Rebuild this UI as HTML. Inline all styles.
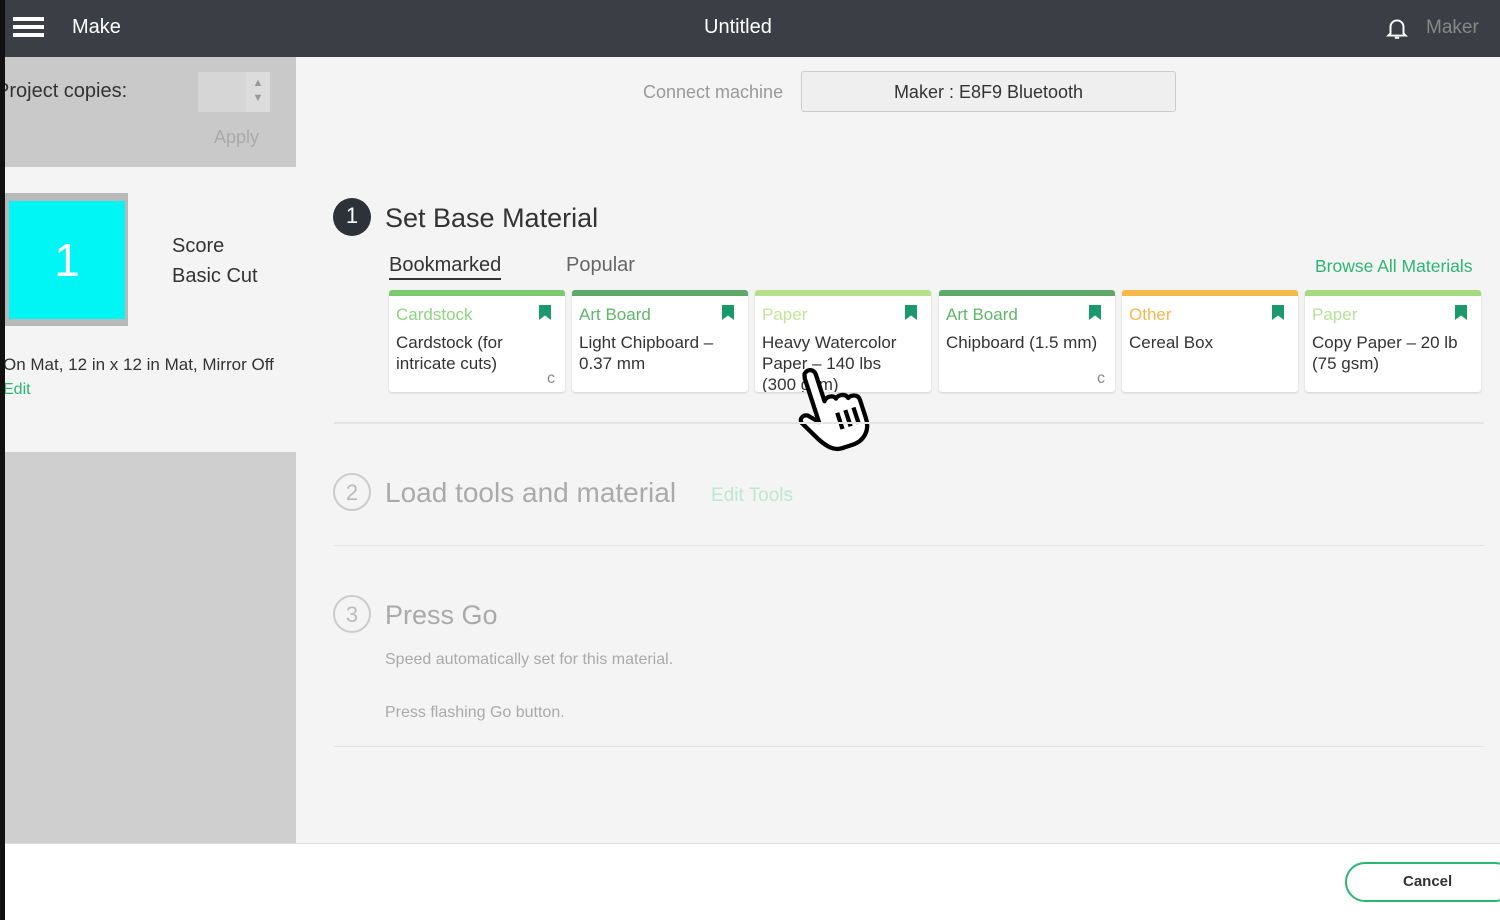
<!DOCTYPE html>
<html><head><style>
*{margin:0;padding:0;box-sizing:border-box}
body{width:1500px;height:920px;overflow:hidden;background:#f4f4f4;font-family:"Liberation Sans",sans-serif;position:relative;color:#333}
.a{position:absolute}
.hdr{left:0;top:0;width:1500px;height:57px;background:#3b3f45;color:#fff}
.card{position:absolute;top:290px;width:176px;height:102px;background:#fff;border-radius:3px;box-shadow:0 1px 2px rgba(0,0,0,.15);overflow:hidden}
.card .bar{height:6px}
.card .cat{position:absolute;left:7px;top:15px;font-size:17px}
.card .nm{position:absolute;left:7px;top:42px;font-size:17px;line-height:21px;color:#333}
.card .bm{position:absolute;right:14px;top:15px;width:12px;height:15px;background:#1a9a6c;clip-path:polygon(0 0,100% 0,100% 100%,50% 70%,0 100%)}
.circ{width:38px;height:38px;border-radius:50%;text-align:center;line-height:36px;font-size:22px}
</style></head><body>
<div class="a" style="left:0;top:0;width:5px;height:920px;background:#111;z-index:5"></div>
<div class="a hdr">
 <div class="a" style="left:13px;top:17px;width:31px;height:4px;background:#fff;box-shadow:0 8px 0 #fff,0 16px 0 #fff"></div>
 <div class="a" style="left:72px;top:16px;font-size:20px">Make</div>
 <div class="a" style="left:704px;top:16px;font-size:20px">Untitled</div>
 <svg class="a" style="left:1384px;top:15px" width="26" height="26" viewBox="0 0 24 24" fill="none" stroke="#fff" stroke-width="1.8"><path d="M6 17V11a6 6 0 0112 0v6l2 2H4z"/><path d="M10 21h4"/></svg>
 <div class="a" style="left:1426px;top:17px;font-size:19px;color:#888">Maker</div>
</div>
<div class="a" style="left:5px;top:57px;width:291px;height:110px;background:#c9c9c9"></div>
<div class="a" style="left:-4px;top:80px;font-size:20px;color:#333">Project copies:</div>
<div class="a" style="left:198px;top:72px;width:72px;height:40px;background:#d6d6d6"></div>
<div class="a" style="left:246px;top:72px;width:24px;height:40px;background:#dcdcdc;color:#999;font-size:11px;text-align:center;line-height:15px;padding-top:4px">▲<br>▼</div>
<div class="a" style="left:214px;top:127px;font-size:18px;color:#aaa">Apply</div>
<div class="a" style="left:5px;top:193px;width:123px;height:133px;background:#b9b9b9"></div>
<div class="a" style="left:9px;top:201px;width:116px;height:118px;background:#00f5f5;color:#fff;font-size:46px;text-align:center;line-height:118px">1</div>
<div class="a" style="left:172px;top:235px;font-size:20px">Score</div>
<div class="a" style="left:172px;top:265px;font-size:20px">Basic Cut</div>
<div class="a" style="left:3px;top:355px;font-size:17px">On Mat, 12 in x 12 in Mat, Mirror Off</div>
<div class="a" style="left:3px;top:381px;font-size:16px;color:#2bb673">Edit</div>
<div class="a" style="left:5px;top:452px;width:291px;height:391px;background:#cfcfcf"></div>

<div class="a" style="left:643px;top:82px;font-size:18px;color:#999">Connect machine</div>
<div class="a" style="left:801px;top:71px;width:375px;height:41px;background:#efefef;border:1px solid #ccc;border-radius:3px;text-align:center;line-height:40px;font-size:18px;color:#333">Maker : E8F9 Bluetooth</div>

<div class="a circ" style="left:333px;top:198px;background:#2d3138;color:#fff">1</div>
<div class="a" style="left:385px;top:203px;font-size:27px;color:#333">Set Base Material</div>
<div class="a" style="left:389px;top:254px;font-size:20px;color:#333;border-bottom:2px solid #333;padding-bottom:1px">Bookmarked</div>
<div class="a" style="left:566px;top:254px;font-size:20px;color:#666">Popular</div>
<div class="a" style="left:1315px;top:256px;font-size:17.5px;color:#2bb673">Browse All Materials</div>

<div class="card" style="left:389px"><div class="bar" style="background:#7cc96e"></div><div class="cat" style="color:#8fd480">Cardstock</div><div class="bm"></div><div class="nm">Cardstock (for<br>intricate cuts)</div><div class="a" style="right:10px;bottom:4px;color:#888;font-size:16px">c</div></div>
<div class="card" style="left:572px"><div class="bar" style="background:#5fa86a"></div><div class="cat" style="color:#5fb56a">Art Board</div><div class="bm"></div><div class="nm">Light Chipboard –<br>0.37 mm</div></div>
<div class="card" style="left:755px"><div class="bar" style="background:#b6e08a"></div><div class="cat" style="color:#c3e59a">Paper</div><div class="bm"></div><div class="nm">Heavy Watercolor<br>Paper – 140 lbs<br>(300 gsm)</div></div>
<div class="card" style="left:939px"><div class="bar" style="background:#5fa86a"></div><div class="cat" style="color:#5fb56a">Art Board</div><div class="bm"></div><div class="nm">Chipboard (1.5 mm)</div><div class="a" style="right:10px;bottom:4px;color:#888;font-size:16px">c</div></div>
<div class="card" style="left:1122px"><div class="bar" style="background:#f5b94a"></div><div class="cat" style="color:#f4b94c">Other</div><div class="bm"></div><div class="nm">Cereal Box</div></div>
<div class="card" style="left:1305px"><div class="bar" style="background:#a6da80"></div><div class="cat" style="color:#b8e09a">Paper</div><div class="bm"></div><div class="nm">Copy Paper – 20 lb<br>(75 gsm)</div></div>

<svg class="a" style="left:792px;top:356px" width="96" height="96" viewBox="0 0 86 90"><g transform="rotate(-18 43 45)"><path d="M20 8c4-4 10-2 10 4v26c3-4 10-3 11 1 3-3 10-2 11 3 3-2 10-1 10 5v18c0 12-8 20-20 20H32c-8 0-13-6-18-14L4 52c-3-4 2-9 7-6l8 9V12z" fill="#fff" stroke="#000" stroke-width="4" stroke-linejoin="round"/><path d="M38 52v16M46 52v16M54 52v16" stroke="#000" stroke-width="4"/></g></svg>

<div class="a" style="left:334px;top:422px;width:1150px;height:2px;background:#e4e4e4"></div>
<div class="a circ" style="left:333px;top:473px;border:2px solid #ccc;color:#bbb">2</div>
<div class="a" style="left:385px;top:477px;font-size:28px;color:#aaa">Load tools and material</div>
<div class="a" style="left:711px;top:485px;font-size:19px;color:#bfe6d3">Edit Tools</div>
<div class="a" style="left:334px;top:545px;width:1150px;height:1px;background:#e4e4e4"></div>
<div class="a circ" style="left:333px;top:595px;border:2px solid #ccc;color:#bbb">3</div>
<div class="a" style="left:385px;top:600px;font-size:27px;color:#aaa">Press Go</div>
<div class="a" style="left:385px;top:651px;font-size:16px;color:#aaa">Speed automatically set for this material.</div>
<div class="a" style="left:385px;top:704px;font-size:16px;color:#aaa">Press flashing Go button.</div>
<div class="a" style="left:334px;top:746px;width:1150px;height:1px;background:#e4e4e4"></div>

<div class="a" style="left:0;top:843px;width:1500px;height:77px;background:#fff;border-top:1px solid #ddd"></div>
<div class="a" style="left:1345px;top:862px;width:170px;height:40px;border:2px solid #2bb673;border-radius:20px;font-size:15px;font-weight:bold;color:#333;line-height:36px;padding-left:56px">Cancel</div>
</body></html>
